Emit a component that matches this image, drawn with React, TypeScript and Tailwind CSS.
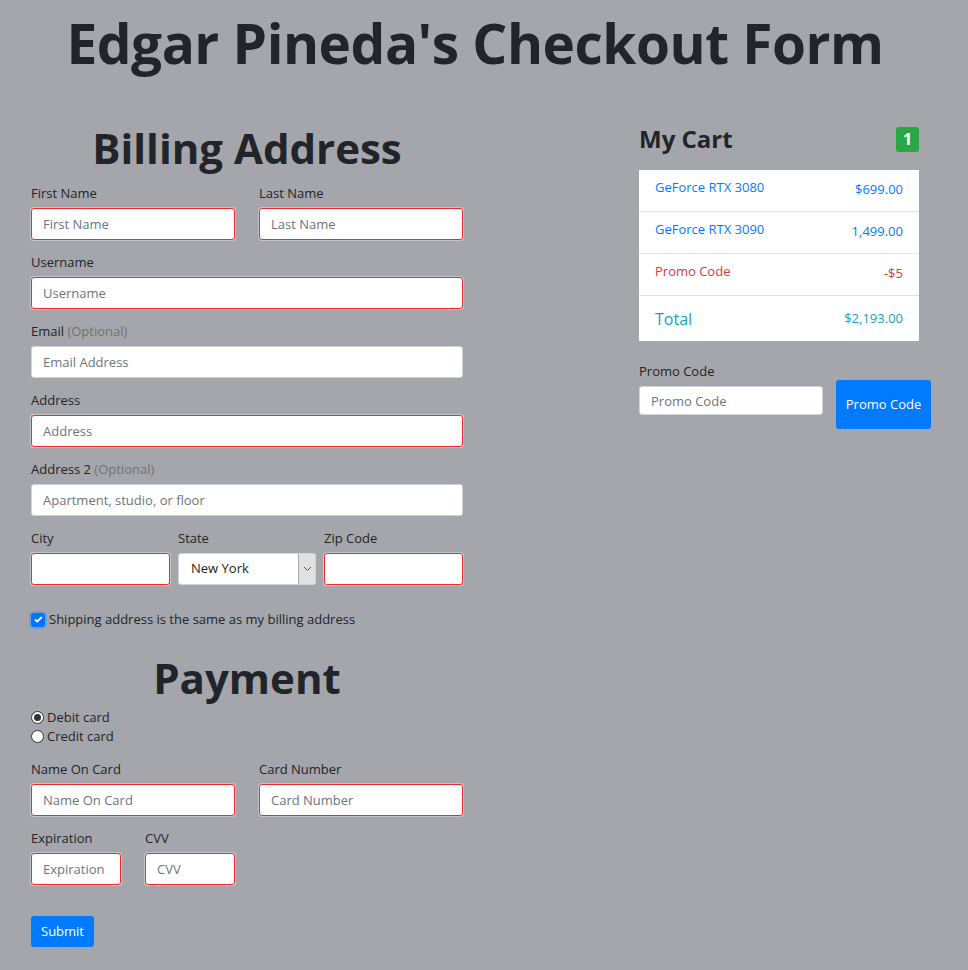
import { useState } from "react";

const font = "font-['Open_Sans',_'Noto_Sans',_sans-serif]";

const inputBase =
  "w-full h-8 px-[11px] bg-white rounded-[3px] text-[13px] text-[#495057] placeholder:text-[#6c757d] outline-none";
const invalid = "border border-[#ee2a2a] shadow-[0_0_0_1px_rgba(255,255,255,0.35)]";
const valid = "border border-[#ced4da]";

const Field = ({
  label,
  placeholder,
  optional,
  required = true,
  className = "",
}: {
  label: string;
  placeholder?: string;
  optional?: boolean;
  required?: boolean;
  className?: string;
}) => (
  <div className={`flex flex-col mb-[13px] ${className}`}>
    <label className="text-[13px] leading-[19px] mb-[5px] text-[#212529]">
      {label}
      {optional && <span className="text-[#6f7277]"> (Optional)</span>}
    </label>
    <input className={`${inputBase} ${required ? invalid : valid}`} placeholder={placeholder} />
  </div>
);

const CartItem = ({
  name,
  price,
  color,
}: {
  name: string;
  price: string;
  color: string;
}) => (
  <li className={`flex justify-between items-start px-4 pt-[8px] h-[42px] border-b border-[#dee2e6] text-[13px] ${color}`}>
    <span className="leading-[19px]">{name}</span>
    <span className="leading-[19px] mt-[2px]">{price}</span>
  </li>
);

export default function App() {
  const [sameAddress, setSameAddress] = useState(true);
  const [payment, setPayment] = useState("debit");

  return (
    <div className={`min-h-screen bg-[#a5a6ab] text-[#212529] ${font}`}>
      <h1 className="text-center text-[55px] font-bold leading-[86px] tracking-[-0.5px] pr-[18px]">
        Edgar Pineda's Checkout Form
      </h1>

      <div className="flex pt-[32px]">
        {/* billing + payment */}
        <form className="w-[432px] ml-[31px]" onSubmit={(e) => e.preventDefault()}>
          <h2 className="text-center text-[42px] font-bold leading-[60px] mb-[6px]">Billing Address</h2>

          <div className="grid grid-cols-2 gap-x-6">
            <Field label="First Name" placeholder="First Name" />
            <Field label="Last Name" placeholder="Last Name" />
          </div>
          <Field label="Username" placeholder="Username" />
          <Field label="Email" placeholder="Email Address" optional required={false} />
          <Field label="Address" placeholder="Address" />
          <Field label="Address 2" placeholder="Apartment, studio, or floor" optional required={false} />

          <div className="grid grid-cols-[139px_138px_139px] gap-x-2">
            <Field label="City" />
            <div className="flex flex-col mb-[13px]">
              <label className="text-[13px] leading-[19px] mb-[5px]">State</label>
              <div className="relative h-8">
                <select className="appearance-none w-full h-8 pl-[12px] bg-white border border-[#ced4da] rounded-[3px] text-[13px] text-[#212529] outline-none">
                  <option>New York</option>
                  <option>California</option>
                  <option>Texas</option>
                </select>
                <span className="absolute right-[1px] top-[1px] bottom-[1px] w-[17px] bg-[#e1e1e1] border-l border-[#adadad] flex items-center justify-center pointer-events-none">
                  <svg width="9" height="6" viewBox="0 0 9 6" fill="none" stroke="#555" strokeWidth="1">
                    <path d="M1 1l3.5 3.5L8 1" />
                  </svg>
                </span>
              </div>
            </div>
            <Field label="Zip Code" />
          </div>

          <label
            className="flex items-center gap-[4px] mt-[12px] text-[13px] leading-[19px] cursor-pointer"
            onClick={() => setSameAddress((p) => !p)}
          >
            <span className="w-[14px] h-[14px] rounded-[3px] bg-[#0075ff] shadow-[0_0_0_2px_rgba(92,150,230,0.6)] flex items-center justify-center">
              {sameAddress && (
                <svg width="9" height="7" viewBox="0 0 9 7" fill="none" stroke="white" strokeWidth="1.8">
                  <path d="M1 3.5l2.2 2L8 1" />
                </svg>
              )}
            </span>
            Shipping address is the same as my billing address
          </label>

          <h2 className="text-center text-[42px] font-bold leading-[60px] mt-[19px]">Payment</h2>

          <div className="flex flex-col text-[13px] leading-[19px] mb-[14px]">
            {[
              ["debit", "Debit card"],
              ["credit", "Credit card"],
            ].map(([key, text]) => (
              <label key={key} className="flex items-center gap-[3px] cursor-pointer" onClick={() => setPayment(key)}>
                <span className="w-[13px] h-[13px] rounded-full bg-white border border-[#333] flex items-center justify-center">
                  {payment === key && <span className="w-[7px] h-[7px] rounded-full bg-[#333]" />}
                </span>
                {text}
              </label>
            ))}
          </div>

          <div className="grid grid-cols-2 gap-x-6">
            <Field label="Name On Card" placeholder="Name On Card" />
            <Field label="Card Number" placeholder="Card Number" />
          </div>
          <div className="flex gap-6">
            <Field label="Expiration" placeholder="Expiration" className="w-[90px]" />
            <Field label="CVV" placeholder="CVV" className="w-[90px]" />
          </div>

          <button
            type="submit"
            className="mt-[18px] h-[31px] px-[10px] bg-[#007bff] text-white text-[13px] rounded-[3px]"
          >
            Submit
          </button>
        </form>

        {/* cart */}
        <div className="ml-[176px] w-[292px] pt-[4px]">
          <div className="flex justify-between items-center w-[280px] mb-[14px]">
            <h4 className="text-[24px] font-bold leading-[34px]">My Cart</h4>
            <span className="w-[23px] h-[25px] rounded-[3px] bg-[#28a745] text-white text-[16px] font-bold flex items-center justify-center">
              1
            </span>
          </div>
          <ul className="w-[280px] bg-white">
            <CartItem name="GeForce RTX 3080" price="$699.00" color="text-[#007bff]" />
            <CartItem name="GeForce RTX 3090" price="1,499.00" color="text-[#007bff]" />
            <CartItem name="Promo Code" price="-$5" color="text-[#dc3545]" />
            <li className="flex justify-between items-center px-4 h-[45px] text-[#17a2b8]">
              <span className="text-[16px]">Total</span>
              <span className="text-[13px]">$2,193.00</span>
            </li>
          </ul>

          <div className="mt-[21px] flex items-end gap-[13px]">
            <div className="flex flex-col w-[184px] mb-[14px]">
              <label className="text-[13px] leading-[19px] mb-[5px]">Promo Code</label>
              <input className={`${inputBase} ${valid} !h-[29px]`} placeholder="Promo Code" />
            </div>
            <button className="w-[95px] h-[49px] mb-[0px] bg-[#007bff] text-white text-[13px] rounded-[3px]">
              Promo Code
            </button>
          </div>
        </div>
      </div>
    </div>
  );
}
